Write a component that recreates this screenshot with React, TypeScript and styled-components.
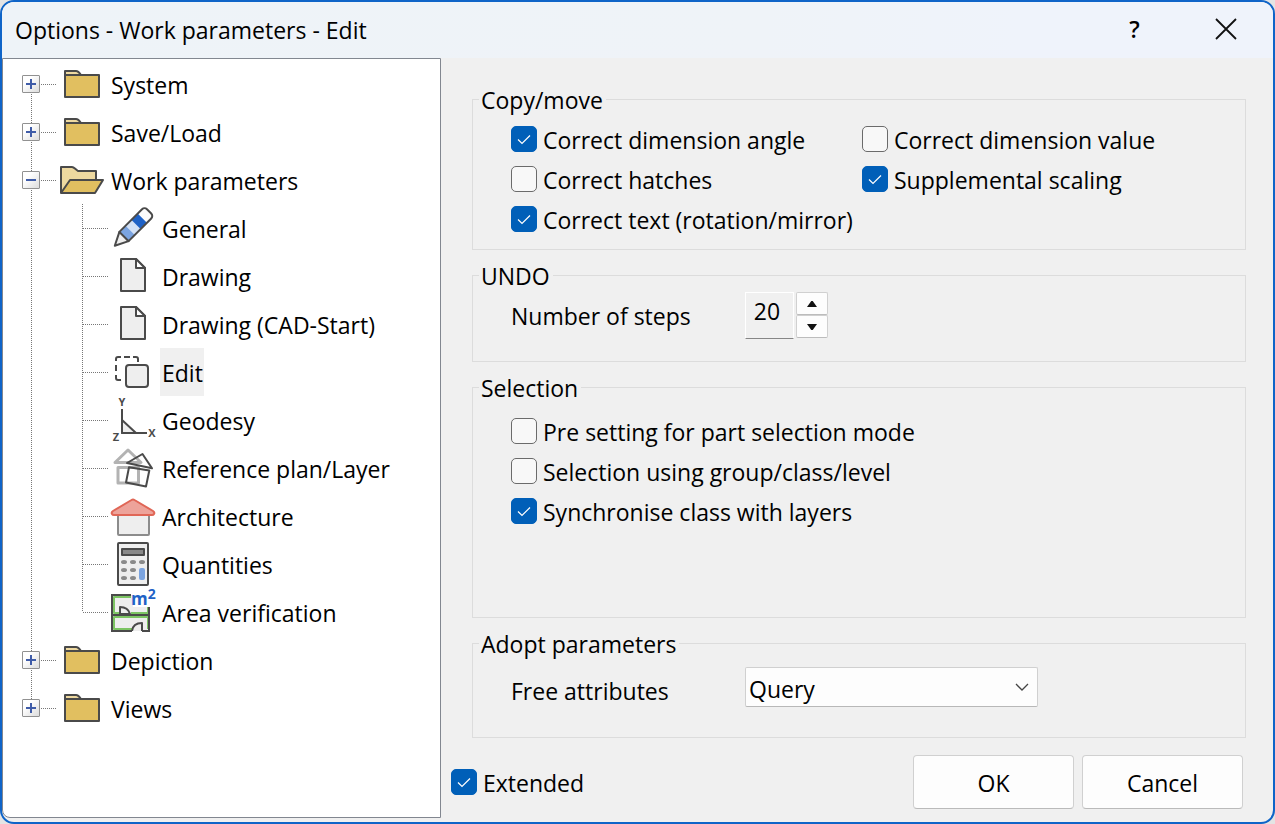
import React, { useId, useState } from "react";
import styled, { createGlobalStyle, css } from "styled-components";

const ink = "#4a4a4a";
const paper = "#eeeeee";
const font = '"Open Sans", "Noto Sans", sans-serif';

const GlobalStyle = createGlobalStyle`
  *, *::before, *::after { box-sizing: border-box; }
  body {
    margin: 0;
    background: #e4e4e4;
    color: #000;
    font-family: ${font};
    font-size: 23px;
    line-height: 32px;
  }
  button, input, select { font: inherit; color: inherit; margin: 0; }
`;

const Dialog = styled.div`
  display: flex;
  flex-direction: column;
  min-height: 100vh;
  border: 2px solid #0f64c8;
  border-radius: 14px;
  background: #f0f0f0;
  overflow: hidden;
`;

const TitleBar = styled.header`
  display: flex;
  align-items: center;
  height: 56px;
  flex: none;
  padding: 0 2px 2px 13px;
  background: linear-gradient(90deg, #eef3f8 0%, #eff3f8 60%, #eff3fb 80%);
`;

const Title = styled.h1`
  flex: 1;
  margin: 0;
  padding-top: 2px;
  font-size: 23px;
  font-weight: 400;
`;

const TitleButton = styled.button`
  display: grid;
  place-items: center;
  width: 91px;
  height: 54px;
  padding: 0;
  border: 0;
  background: transparent;
  font-weight: 600;
`;

const Body = styled.div`
  display: flex;
  flex: 1;
`;

const TreePanel = styled.nav`
  flex: none;
  width: 439px;
  margin-bottom: 4px;
  padding-top: 1px;
  border: 1px solid #828790;
  border-bottom-left-radius: 8px;
  background: #fff;
`;

const TreeList = styled.ul`
  margin: 0;
  padding: 0;
  list-style: none;
`;

const dotsDown = "repeating-linear-gradient(180deg, #777 0 1px, transparent 1px 2px)";
const dotsAcross = "repeating-linear-gradient(90deg, #777 0 1px, transparent 1px 2px)";

const TreeRow = styled.div`
  display: flex;
  align-items: center;
  height: 48px;
`;

type Edge = "first" | "middle" | "last";

const RootGutter = styled.span<{ $edge: Edge }>`
  flex: none;
  display: flex;
  align-items: center;
  width: 54px;
  height: 48px;
  padding-left: 19px;
  background-image: ${dotsDown}, ${dotsAcross};
  background-repeat: no-repeat;
  background-size: 1px ${(p) => (p.$edge === "middle" ? "48px" : "24px")}, 26px 1px;
  background-position: 28px ${(p) => (p.$edge === "first" ? "24px" : "0")}, 28px 24px;
`;

const ChildGutter = styled.span<{ $edge: Edge }>`
  flex: none;
  width: 106px;
  height: 48px;
  background-image: ${dotsDown}, ${dotsDown}, ${dotsAcross};
  background-repeat: no-repeat;
  background-size: 1px 48px, 1px ${(p) => (p.$edge === "last" ? "24px" : "48px")}, 26px 1px;
  background-position: 28px 0, 79px 0, 80px 24px;
`;

const Expander = styled.button`
  display: grid;
  place-items: center;
  width: 18px;
  height: 18px;
  padding: 0;
  border: 1px solid #919191;
  border-radius: 1px;
  background: linear-gradient(135deg, #fff 30%, #dcdcdc);
`;

const RowIcon = styled.svg`
  flex: none;
  width: 51px;
  height: 48px;
  fill: none;
  stroke: ${ink};
  stroke-width: 2;
  stroke-linejoin: round;
`;

const RowLabel = styled.a<{ $selected?: boolean }>`
  height: 48px;
  padding: 1px 1px 0 2px;
  line-height: 48px;
  color: #000;
  text-decoration: none;
  white-space: nowrap;
  ${(p) => p.$selected && css`background: #f0f0f0;`}
`;

const Pane = styled.main`
  display: flex;
  flex: 1;
  flex-direction: column;
  gap: 12px;
  min-width: 0;
  padding: 28px 27px 13px 31px;
`;

const Group = styled.fieldset<{ $grow?: boolean }>`
  min-width: 0;
  margin: 0;
  padding: 0 32px 0 38px;
  border: 1px solid #dcdcdc;
  flex: ${(p) => (p.$grow ? "1 0 auto" : "none")};
`;

const Legend = styled.legend`
  height: 26px;
  margin-left: -32px;
  padding: 0 3px 0 2px;
  line-height: 28px;
`;

const CheckGrid = styled.div`
  display: grid;
  grid-template-columns: 1fr 1fr;
  grid-auto-rows: 40px;
  padding: 7px 0 10px;
`;

const CheckColumn = styled.div`
  display: grid;
  grid-auto-rows: 40px;
  padding: 11px 0;
`;

const CheckLabel = styled.label`
  display: flex;
  align-items: center;
  gap: 6px;
  white-space: nowrap;
`;

const CheckText = styled.span`
  padding-top: 1px;
`;

const Stack = styled.span`
  display: grid;
  align-items: center;

  > * { grid-area: 1 / 1; }
  > svg { pointer-events: none; }
`;

const CheckBox = styled.input`
  appearance: none;
  width: 26px;
  height: 26px;
  border: 1px solid #6b6b6b;
  border-radius: 5px;
  background: #f8f8f8;

  &:checked { border-color: #005fb8; background: #005fb8; }
  & + svg { visibility: hidden; }
  &:checked + svg { visibility: visible; }
`;

const FieldRow = styled.div<{ $roomy?: boolean }>`
  display: grid;
  grid-template-columns: 234px minmax(0, 293px);
  align-items: center;
  padding: ${(p) => (p.$roomy ? "11px 0 30px" : "4px 0 22px")};

  > label { padding-top: ${(p) => (p.$roomy ? "8px" : "1px")}; }
`;

const Spinner = styled.div`
  display: flex;
  gap: 2px;
`;

const StepField = styled.input`
  appearance: textfield;
  width: 49px;
  height: 47px;
  padding: 0 5px 9px 0;
  border: 1px solid #fff;
  border-bottom-color: #868686;
  background: #f0f0f0;
  text-align: center;

  &::-webkit-inner-spin-button, &::-webkit-outer-spin-button { appearance: none; margin: 0; }
`;

const StepButtons = styled.div`
  display: grid;
  width: 32px;
  height: 46px;
`;

const StepButton = styled.button`
  display: grid;
  place-items: center;
  padding: 0;
  border: 1px solid #d0d0d0;
  border-bottom-color: #bcbcbc;
  border-radius: 2px;
  background: #fdfdfd;
`;

const Select = styled.select`
  appearance: none;
  width: 100%;
  height: 40px;
  padding: 3px 32px 0 3px;
  border: 1px solid #d0d0d0;
  border-bottom-color: #b8b8b8;
  border-radius: 2px;
  background: #fdfdfd;
`;

const Chevron = styled.svg`
  justify-self: end;
  margin-right: 8px;
`;

const Footer = styled.footer`
  display: flex;
  align-items: center;
  gap: 8px;
  margin: 5px 3px 0 -21px;
`;

const FooterCheck = styled.div`
  flex: 1;
`;

const PushButton = styled.button`
  width: 161px;
  height: 54px;
  padding: 1px 0 0;
  border: 1px solid #d0d0d0;
  border-bottom-color: #bababa;
  border-radius: 4px;
  background: #fdfdfd;
`;

const ClosedFolder = () => (
  <RowIcon viewBox="0 0 51 48" aria-hidden="true">
    <path d="M8 15V11h11c2 0 3 1 5 4z" fill="#eed9a0" />
    <path d="M8 15h34v22H8z" fill="#e1bf60" />
  </RowIcon>
);

const OpenFolder = () => (
  <RowIcon viewBox="0 0 51 48" aria-hidden="true">
    <path d="M4 37V11h11c2 0 3 2 6 4h18v9" fill="#eed9a0" />
    <path d="M4 37l9-13h33l-8 13z" fill="#e1bf60" />
  </RowIcon>
);

const PencilIcon = () => (
  <RowIcon viewBox="0 0 51 48" aria-hidden="true">
    <g transform="translate(15 32.500) rotate(-45)">
      <path d="M0-6.500L-13 0 0 6.500z" fill={paper} />
      <g stroke="none">
        <rect x="0" y="-6" width="9" height="12" fill="#7ba4e0" />
        <rect x="9" y="-6" width="8" height="12" fill="#d3e1f6" />
        <rect x="17" y="-6" width="9" height="12" fill="#1f62c6" />
        <rect x="26" y="-6" width="8" height="12" fill="#fbfbfb" />
      </g>
      <path d="M0-6.500h32a3.500 3.500 0 0 1 3.500 3.500v6a3.500 3.500 0 0 1-3.500 3.500H0z" />
    </g>
  </RowIcon>
);

const PageIcon = () => (
  <RowIcon viewBox="0 0 51 48" aria-hidden="true">
    <path d="M12 7h15l9 9v23H12z" fill={paper} />
    <path d="M27 7v9h9z" fill="#fff" />
  </RowIcon>
);

const EditIcon = () => (
  <RowIcon viewBox="0 0 51 48" aria-hidden="true">
    <path d="M7 13v-2a2 2 0 0 1 2-2h3M15 9h6M24 9h3a2 2 0 0 1 2 2v3M7 17v6M7 27v3a2 2 0 0 0 2 2h3" />
    <rect x="17" y="17" width="22" height="22" rx="3" fill={paper} />
  </RowIcon>
);

const AxisLetter = styled.text`
  fill: ${ink};
  stroke: none;
  font: 700 11px ${font};
  text-anchor: middle;
`;

const GeodesyIcon = () => (
  <RowIcon viewBox="0 0 51 48" aria-hidden="true" overflow="visible">
    <path d="M13 24l14 13H13z" fill={paper} />
    <path d="M13 13v24h25" />
    <AxisLetter x="13" y="10">Y</AxisLetter>
    <AxisLetter x="43" y="41">X</AxisLetter>
    <AxisLetter x="7" y="45">Z</AxisLetter>
  </RowIcon>
);

const ReferenceIcon = () => (
  <RowIcon viewBox="0 0 51 48" aria-hidden="true">
    <g stroke="#b3b3b3" strokeWidth="3">
      <path d="M6 18.500L19 6l13 12.500z" />
      <path d="M9 23.500h20.500v15.500H9z" />
    </g>
    <g strokeWidth="2">
      <path d="M18 19l15.500-9L43 24.300z" />
      <path d="M20 23.200l20.300 3.300L37 42.500 17 38.500z" />
    </g>
  </RowIcon>
);

const HouseIcon = () => (
  <RowIcon viewBox="0 0 51 48" aria-hidden="true">
    <rect x="9" y="20" width="31" height="23" rx="1" fill={paper} stroke="#8c8c8c" />
    <path
      d="M22.500 8q1.500-1 3 0L44 19q2 1.500 1 3-.5 1-2 1H5q-1.500 0-2-1-1-1.500 1-3z"
      fill="#eda39a"
      stroke="#e06656"
    />
  </RowIcon>
);

const CalculatorIcon = () => (
  <RowIcon viewBox="0 0 51 48" aria-hidden="true">
    <rect x="9" y="3" width="30" height="42" rx="1" fill={paper} />
    <rect x="13" y="9" width="22" height="6" fill="#888" />
    <g stroke="none" fill="#8a8a8a">
      {[22, 30, 38].map((y) =>
        [15, 24, 33].map((x) =>
          x === 33 && y > 22 ? null : <ellipse key={`${x}-${y}`} cx={x} cy={y} rx="3" ry="2" />
        )
      )}
      <rect x="30" y="28" width="6" height="12" rx="2" fill="#7ba4e0" />
    </g>
  </RowIcon>
);

const AreaUnit = styled.text`
  fill: #1f62c6;
  stroke: none;
  font: 700 17px ${font};
`;

const AreaPower = styled.tspan`
  font-size: 14px;
`;

const AreaIcon = () => (
  <RowIcon viewBox="0 0 51 48" aria-hidden="true" overflow="visible">
    <path d="M3 7h21v12h17v24H3z" fill={paper} stroke="none" />
    <path d="M22 9H5v16h5M22 25h17v-6M23 41H5V29h34v12" stroke="#7cc463" />
    <path d="M11 26v-7q8 0 10 7z" fill={paper} />
    <path d="M33 43v-8q-9 0-10 8z" fill={paper} stroke="none" />
    <path d="M33 43v-8q-9 0-10 8" />
    <path d="M22 7H3v36h20M33 43h7V19M3 27h37" strokeLinejoin="miter" />
    <AreaUnit x="22" y="17">
      m<AreaPower dy="-6">2</AreaPower>
    </AreaUnit>
  </RowIcon>
);

type Leaf = { label: string; icon: React.ComponentType };
type Branch = { label: string; children?: Leaf[] };

const tree: Branch[] = [
  { label: "System" },
  { label: "Save/Load" },
  {
    label: "Work parameters",
    children: [
      { label: "General", icon: PencilIcon },
      { label: "Drawing", icon: PageIcon },
      { label: "Drawing (CAD-Start)", icon: PageIcon },
      { label: "Edit", icon: EditIcon },
      { label: "Geodesy", icon: GeodesyIcon },
      { label: "Reference plan/Layer", icon: ReferenceIcon },
      { label: "Architecture", icon: HouseIcon },
      { label: "Quantities", icon: CalculatorIcon },
      { label: "Area verification", icon: AreaIcon },
    ],
  },
  { label: "Depiction" },
  { label: "Views" },
];

const rootEdge = (index: number): Edge =>
  index === 0 ? "first" : index === tree.length - 1 ? "last" : "middle";

const BranchIconSlot = styled.span`
  flex: none;
  display: flex;
  width: 52px;
`;

function OptionsTree() {
  return (
    <TreePanel aria-label="Options">
      <TreeList>
        {tree.map((branch, i) => (
          <li key={branch.label}>
            <TreeRow>
              <RootGutter $edge={rootEdge(i)}>
                <Expander type="button" aria-label={`Toggle ${branch.label}`}>
                  <svg width="12" height="12" stroke="#3f5ca8" strokeWidth="2" aria-hidden="true">
                    <path d={branch.children ? "M1 6h10" : "M1 6h10M6 1v10"} />
                  </svg>
                </Expander>
              </RootGutter>
              <BranchIconSlot>{branch.children ? <OpenFolder /> : <ClosedFolder />}</BranchIconSlot>
              <RowLabel href="#">{branch.label}</RowLabel>
            </TreeRow>
            {branch.children && (
              <TreeList>
                {branch.children.map(({ label, icon: Icon }, j, all) => (
                  <li key={label}>
                    <TreeRow>
                      <ChildGutter $edge={j === all.length - 1 ? "last" : "middle"} />
                      <Icon />
                      <RowLabel href="#" $selected={label === "Edit"}>
                        {label}
                      </RowLabel>
                    </TreeRow>
                  </li>
                ))}
              </TreeList>
            )}
          </li>
        ))}
      </TreeList>
    </TreePanel>
  );
}

function Check({ label, checked }: { label: string; checked?: boolean }) {
  return (
    <CheckLabel>
      <Stack>
        <CheckBox type="checkbox" defaultChecked={checked} />
        <svg width="26" height="26" fill="none" stroke="#fff" strokeWidth="1.2" aria-hidden="true">
          <path d="M7 13.500l4 4 8-8" />
        </svg>
      </Stack>
      <CheckText>{label}</CheckText>
    </CheckLabel>
  );
}

function StepsField() {
  const id = useId();
  const [steps, setSteps] = useState(20);
  return (
    <FieldRow>
      <label htmlFor={id}>Number of steps</label>
      <Spinner>
        <StepField
          id={id}
          type="number"
          value={steps}
          onChange={(e) => setSteps(Number(e.target.value))}
        />
        <StepButtons>
          <StepButton type="button" aria-label="Increase" onClick={() => setSteps(steps + 1)}>
            <svg width="12" height="8" fill="#111" aria-hidden="true">
              <path d="M1 7L5.300 1h1.400L11 7z" />
            </svg>
          </StepButton>
          <StepButton type="button" aria-label="Decrease" onClick={() => setSteps(steps - 1)}>
            <svg width="12" height="8" fill="#111" aria-hidden="true">
              <path d="M1 1L5.300 7h1.400L11 1z" />
            </svg>
          </StepButton>
        </StepButtons>
      </Spinner>
    </FieldRow>
  );
}

function AttributesField() {
  const id = useId();
  return (
    <FieldRow $roomy>
      <label htmlFor={id}>Free attributes</label>
      <Stack>
        <Select id={id} defaultValue="Query">
          <option>Query</option>
        </Select>
        <Chevron width="16" height="10" fill="none" stroke="#444" strokeWidth="1.3" aria-hidden="true">
          <path d="M2 2l6 6 6-6" />
        </Chevron>
      </Stack>
    </FieldRow>
  );
}

export default function App() {
  return (
    <>
      <GlobalStyle />
      <Dialog role="dialog" aria-label="Options - Work parameters - Edit">
        <TitleBar>
          <Title>Options - Work parameters - Edit</Title>
          <TitleButton type="button">?</TitleButton>
          <TitleButton type="button" aria-label="Close">
            <svg width="22" height="22" stroke="#111" strokeWidth="1.8" aria-hidden="true">
              <path d="M1 1l20 20M21 1L1 21" />
            </svg>
          </TitleButton>
        </TitleBar>
        <Body>
          <OptionsTree />
          <Pane>
            <Group>
              <Legend>Copy/move</Legend>
              <CheckGrid>
                <Check label="Correct dimension angle" checked />
                <Check label="Correct dimension value" />
                <Check label="Correct hatches" />
                <Check label="Supplemental scaling" checked />
                <Check label="Correct text (rotation/mirror)" checked />
              </CheckGrid>
            </Group>
            <Group>
              <Legend>UNDO</Legend>
              <StepsField />
            </Group>
            <Group $grow>
              <Legend>Selection</Legend>
              <CheckColumn>
                <Check label="Pre setting for part selection mode" />
                <Check label="Selection using group/class/level" />
                <Check label="Synchronise class with layers" checked />
              </CheckColumn>
            </Group>
            <Group>
              <Legend>Adopt parameters</Legend>
              <AttributesField />
            </Group>
            <Footer>
              <FooterCheck>
                <Check label="Extended" checked />
              </FooterCheck>
              <PushButton type="button">OK</PushButton>
              <PushButton type="button">Cancel</PushButton>
            </Footer>
          </Pane>
        </Body>
      </Dialog>
    </>
  );
}
